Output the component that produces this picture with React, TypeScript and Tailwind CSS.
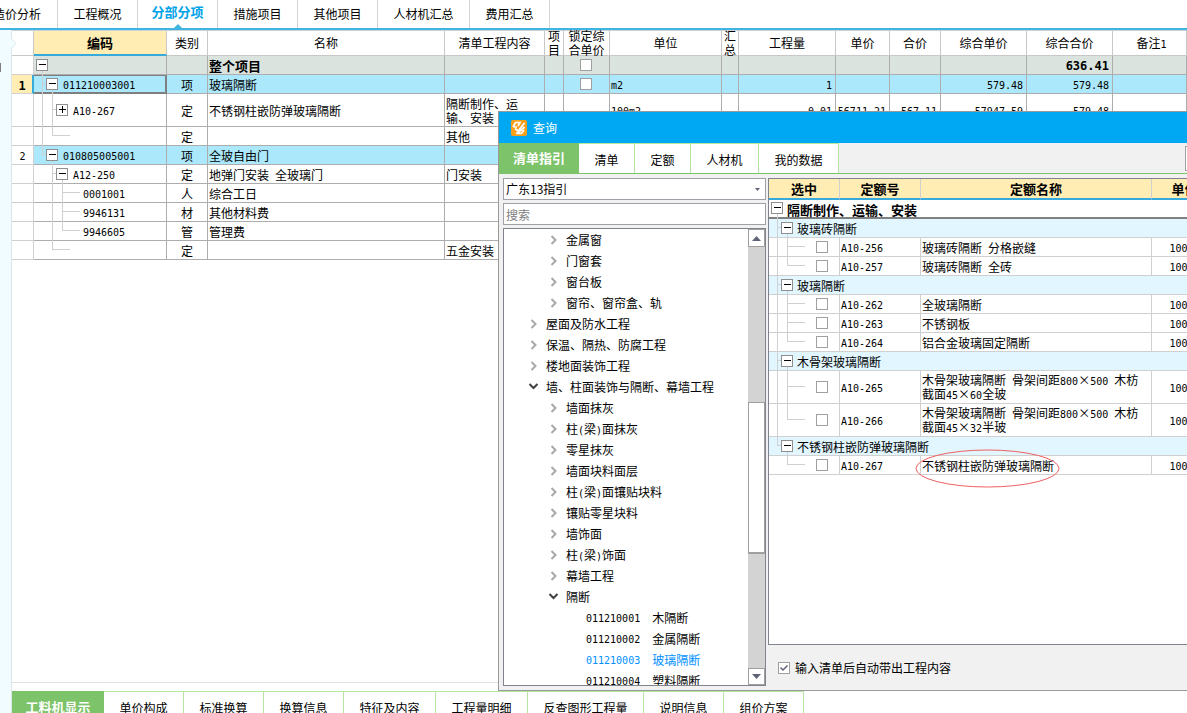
import React, { useState } from "react";
import clsx from "clsx";

const FONT = "font-['Noto_Sans_CJK_SC',sans-serif]";
const MONO = "font-['DejaVu_Sans_Mono','Noto_Sans_CJK_SC',monospace] leading-none";

/* Latin letters and digits are half the width of a Chinese character */
const Txt = ({ children, big }: { children: string; big?: boolean }) => (
  <>
    {children.split(/([\x20-\x7e]+)/).map((part, i) =>
      i % 2 ? (
        <span key={i} className={clsx(MONO, big ? "text-[12px]" : "text-[10px]")}>
          {part}
        </span>
      ) : (
        part
      )
    )}
  </>
);

type GuideProps = {
  width: number;
  height: number;
  d?: string;
  box?: number;
  plus?: boolean;
  color?: string;
};

/* Indent lines of a tree row, with the fold box when the row has children */
const Guide = ({ width, height, d, box, plus, color = "#d0d0d0" }: GuideProps) => {
  const top = Math.floor((height - 12) / 2);
  const drawing = (
    <svg width={width} height={height} className="block overflow-visible" shapeRendering="crispEdges">
      {d && <path d={d} fill="none" stroke={color} />}
      {box !== undefined && (
        <>
          <rect x={box + 0.5} y={top + 0.5} width={11} height={11} fill="#fff" stroke="#8f8f8f" />
          <path
            d={`M${box + 3} ${top + 5.5}h7${plus ? `M${box + 6.5} ${top + 2}v7` : ""}`}
            stroke="#000"
            fill="none"
          />
        </>
      )}
    </svg>
  );
  if (box === undefined) return drawing;
  return (
    <button type="button" aria-label={plus ? "展开" : "收起"} className="shrink-0">
      {drawing}
    </button>
  );
};

const Check = ({ label, defaultChecked }: { label: string; defaultChecked?: boolean }) => (
  <input
    type="checkbox"
    aria-label={label}
    defaultChecked={defaultChecked}
    className="block size-3 shrink-0 appearance-none border border-[#a0a0a0] bg-white"
  />
);

const topTabs = [
  { name: "造价分析", className: "w-[58px] justify-end pr-4" },
  { name: "工程概况", className: "w-20" },
  { name: "分部分项", className: "w-20" },
  { name: "措施项目", className: "w-20" },
  { name: "其他项目", className: "w-20" },
  { name: "人材机汇总", className: "w-23" },
  { name: "费用汇总", className: "w-20" },
];

const bottomTabs = [
  { name: "工料机显示", className: "w-23" },
  { name: "单价构成", className: "w-20" },
  { name: "标准换算", className: "w-20" },
  { name: "换算信息", className: "w-20" },
  { name: "特征及内容", className: "w-23" },
  { name: "工程量明细", className: "w-23" },
  { name: "反查图形工程量", className: "w-29" },
  { name: "说明信息", className: "w-20" },
  { name: "组价方案", className: "w-20" },
];

const queryTabs = [
  { name: "清单指引", className: "w-20" },
  { name: "清单", className: "w-14" },
  { name: "定额", className: "w-14" },
  { name: "人材机", className: "w-17" },
  { name: "我的数据", className: "w-20" },
];

const columns = [
  { name: "", className: "w-[22px]" },
  { name: "编码", className: "w-[133px]" },
  { name: "类别", className: "w-[41px]" },
  { name: "名称", className: "w-[237px]" },
  { name: "清单工程内容", className: "w-[100px]" },
  { name: "项目", className: "w-[19px]" },
  { name: "锁定综合单价", className: "w-[46px]" },
  { name: "单位", className: "w-[112px]" },
  { name: "汇总", className: "w-[17px]" },
  { name: "工程量", className: "w-[97px]" },
  { name: "单价", className: "w-[54px]" },
  { name: "合价", className: "w-[51px]" },
  { name: "综合单价", className: "w-[86px]" },
  { name: "综合合价", className: "w-[86px]" },
  { name: "备注1", className: "" },
];

type BillRow = {
  no?: string;
  kind: "total" | "item" | "plain";
  code?: string;
  guide: GuideProps;
  type?: string;
  name?: string;
  content?: string;
  lock?: boolean;
  unit?: string;
  nums?: string[];
  selected?: boolean;
};

const billRows: BillRow[] = [
  {
    kind: "total",
    guide: { width: 14, height: 18, box: 2, d: "M8.5 15V19" },
    name: "整个项目",
    lock: true,
    nums: ["", "", "", "", "636.41"],
  },
  {
    no: "1",
    kind: "item",
    code: "011210003001",
    guide: { width: 24, height: 18, box: 12, d: "M8.5 0V19M8.5 8.5H12M18.5 15V19" },
    type: "项",
    name: "玻璃隔断",
    lock: true,
    unit: "m2",
    nums: ["1", "", "", "579.48", "579.48"],
    selected: true,
  },
  {
    kind: "plain",
    code: "A10-267",
    guide: { width: 34, height: 32, box: 22, plus: true, d: "M8.5 0V33M18.5 0V33M18.5 15.5H22" },
    type: "定",
    name: "不锈钢柱嵌防弹玻璃隔断",
    content: "隔断制作、运输、安装",
    unit: "100m2",
    nums: ["0.01", "56711.21", "567.11", "57947.59", "579.48"],
  },
  {
    kind: "plain",
    guide: { width: 36, height: 18, d: "M8.5 0V19M18.5 0V8.5H36" },
    type: "定",
    content: "其他",
  },
  {
    no: "2",
    kind: "item",
    code: "010805005001",
    guide: { width: 24, height: 18, box: 12, d: "M8.5 0V8.5H12M18.5 15V19" },
    type: "项",
    name: "全玻自由门",
  },
  {
    kind: "plain",
    code: "A12-250",
    guide: { width: 34, height: 18, box: 22, d: "M18.5 0V19M18.5 8.5H22M28.5 15V19" },
    type: "定",
    name: "地弹门安装 全玻璃门",
    content: "门安装",
  },
  {
    kind: "plain",
    code: "0001001",
    guide: { width: 44, height: 18, d: "M18.5 0V19M28.5 0V19M28.5 8.5H46" },
    type: "人",
    name: "综合工日",
  },
  {
    kind: "plain",
    code: "9946131",
    guide: { width: 44, height: 18, d: "M18.5 0V19M28.5 0V19M28.5 8.5H46" },
    type: "材",
    name: "其他材料费",
  },
  {
    kind: "plain",
    code: "9946605",
    guide: { width: 44, height: 18, d: "M18.5 0V19M28.5 0V8.5H46" },
    type: "管",
    name: "管理费",
  },
  {
    kind: "plain",
    guide: { width: 36, height: 18, d: "M18.5 0V8.5H36" },
    type: "定",
    content: "五金安装",
  },
];

const treeRows = [
  { level: 1, name: "金属窗" },
  { level: 1, name: "门窗套" },
  { level: 1, name: "窗台板" },
  { level: 1, name: "窗帘、窗帘盒、轨" },
  { level: 0, name: "屋面及防水工程" },
  { level: 0, name: "保温、隔热、防腐工程" },
  { level: 0, name: "楼地面装饰工程" },
  { level: 0, name: "墙、柱面装饰与隔断、幕墙工程", open: true },
  { level: 1, name: "墙面抹灰" },
  { level: 1, name: "柱(梁)面抹灰" },
  { level: 1, name: "零星抹灰" },
  { level: 1, name: "墙面块料面层" },
  { level: 1, name: "柱(梁)面镶贴块料" },
  { level: 1, name: "镶贴零星块料" },
  { level: 1, name: "墙饰面" },
  { level: 1, name: "柱(梁)饰面" },
  { level: 1, name: "幕墙工程" },
  { level: 1, name: "隔断", open: true },
  { level: 2, code: "011210001", name: "木隔断" },
  { level: 2, code: "011210002", name: "金属隔断" },
  { level: 2, code: "011210003", name: "玻璃隔断", active: true },
  { level: 2, code: "011210004", name: "塑料隔断" },
];

type QuotaGroup = { name: string; last?: boolean; items: { code: string; name: string; tall?: boolean; marked?: boolean }[] };

const quotaGroups: QuotaGroup[] = [
  {
    name: "玻璃砖隔断",
    items: [
      { code: "A10-256", name: "玻璃砖隔断 分格嵌缝" },
      { code: "A10-257", name: "玻璃砖隔断 全砖" },
    ],
  },
  {
    name: "玻璃隔断",
    items: [
      { code: "A10-262", name: "全玻璃隔断" },
      { code: "A10-263", name: "不锈钢板" },
      { code: "A10-264", name: "铝合金玻璃固定隔断" },
    ],
  },
  {
    name: "木骨架玻璃隔断",
    items: [
      { code: "A10-265", name: "木骨架玻璃隔断 骨架间距800×500 木枋截面45×60全玻", tall: true },
      { code: "A10-266", name: "木骨架玻璃隔断 骨架间距800×500 木枋截面45×32半玻", tall: true },
    ],
  },
  {
    name: "不锈钢柱嵌防弹玻璃隔断",
    last: true,
    items: [{ code: "A10-267", name: "不锈钢柱嵌防弹玻璃隔断", marked: true }],
  },
];

const TopTabs = () => (
  <nav className="flex h-[30px] shrink-0 border-b-2 border-[#3fb4e0] bg-white">
    {topTabs.map((tab) => (
      <button
        key={tab.name}
        type="button"
        className={clsx(
          "relative flex h-7 shrink-0 items-center border-r border-[#d4d4d4] whitespace-nowrap",
          tab.className,
          tab.name !== "造价分析" && "justify-center",
          tab.name === "分部分项" && "pb-1 text-[13px] font-bold text-[#00a2e8]"
        )}
      >
        {tab.name}
        {tab.name === "分部分项" && (
          <svg className="absolute bottom-0 left-9 h-1 w-2" viewBox="0 0 8 4">
            <path d="M4 0l4 4H0z" fill="#3fb4e0" />
          </svg>
        )}
      </button>
    ))}
  </nav>
);

const BillTable = () => (
  <table className="w-full table-fixed border-separate border-spacing-0 border-t border-[#c8d4d8]">
    <colgroup>
      {columns.map((col) => (
        <col key={col.name} className={col.className} />
      ))}
    </colgroup>
    <thead>
      <tr>
        {columns.map((col) => (
          <th
            key={col.name}
            className={clsx(
              "border-r border-[#c8c8c8] p-0",
              col.name === "编码"
                ? "border-b-2 border-b-[#36a9dd] bg-[#ffedb4] text-[13px] font-bold"
                : "border-b font-normal"
            )}
          >
            <div
              className={clsx(
                "flex items-center justify-center",
                col.name === "编码" ? "h-[23px]" : "h-6",
                col.name === "备注1" && "pl-1"
              )}
            >
              <span>
                <Txt>{col.name}</Txt>
              </span>
            </div>
          </th>
        ))}
      </tr>
    </thead>
    <tbody>
      {billRows.map((row, i) => {
        const fill = clsx(row.kind === "total" && "bg-[#dae3de]", row.kind === "item" && "bg-[#ace8fb]");
        const cell = clsx("border-r border-b border-[#adadad]", fill);
        const nums = row.nums ?? ["", "", "", "", ""];
        return (
          <tr key={i} className={clsx(row.kind === "total" && "text-[13px] font-bold")}>
            <td
              className={clsx(
                "border-b border-[#d0d0d0] text-center",
                row.selected ? "border-r-2 border-r-[#36a9dd] bg-[#ffedb4] pt-px font-bold" : "border-r"
              )}
            >
              <Txt big={row.selected}>{row.no ?? ""}</Txt>
            </td>
            <td
              className={clsx(
                "border-r border-b",
                fill,
                row.selected
                  ? "border-[#7f7f7f] shadow-[inset_-1px_-1px_0_#7f7f7f,inset_0_1px_0_#7f7f7f]"
                  : "border-[#adadad]"
              )}
            >
              <div className="flex items-center gap-[5px]">
                <Guide {...row.guide} />
                <span>
                  <Txt>{row.code ?? ""}</Txt>
                </span>
              </div>
            </td>
            <td className={clsx(cell, "pt-px text-center")}>{row.type}</td>
            <td className={clsx(cell, "pt-px pl-px")}>
              <Txt>{row.name ?? ""}</Txt>
            </td>
            <td className={clsx(cell, "pt-px pl-px")}>{row.content && <div className="pr-4">{row.content}</div>}</td>
            <td className={cell} />
            <td className={cell}>
              {row.lock && (
                <div className="flex justify-center pr-px">
                  <Check label="锁定综合单价" />
                </div>
              )}
            </td>
            <td className={clsx(cell, "pl-px")}>
              <Txt>{row.unit ?? ""}</Txt>
            </td>
            <td className={cell} />
            {nums.map((n, k) => (
              <td key={k} className={clsx(cell, "pr-[3px] text-right")}>
                <Txt big={row.kind === "total"}>{n}</Txt>
              </td>
            ))}
            <td className={cell} />
          </tr>
        );
      })}
    </tbody>
  </table>
);

const GuideTree = () => (
  <div className="flex min-h-0 flex-1 border border-[#80848f] bg-white">
    <ul className="min-w-0 flex-1 overflow-hidden">
      {treeRows.map((row) => (
        <li
          key={row.name + row.level}
          className={clsx(
            "flex h-[21px] items-center whitespace-nowrap",
            row.level === 0 && "pl-6",
            row.level === 1 && "pl-11",
            row.level === 2 && "gap-3 pl-[82px]",
            row.active && "text-[#0090ff]"
          )}
        >
          {row.level < 2 && (
            <button type="button" aria-label={row.open ? "收起" : "展开"} className="mr-1.5 w-3">
              {row.open ? (
                <svg width="12" height="10" viewBox="0 0 12 10" fill="none" stroke="#404040" strokeWidth="2">
                  <path d="M1.5 2l4 4 4-4" />
                </svg>
              ) : (
                <svg width="12" height="10" viewBox="0 0 12 10" fill="none" stroke="#a8a8a8" strokeWidth="2">
                  <path d="M3.5 1l4 4-4 4" />
                </svg>
              )}
            </button>
          )}
          {row.code && (
            <span className="pb-px">
              <Txt>{row.code}</Txt>
            </span>
          )}
          <span>
            <Txt>{row.name}</Txt>
          </span>
        </li>
      ))}
    </ul>
    <div className="flex w-[17px] shrink-0 flex-col bg-[#d3d3d3]">
      <button
        type="button"
        aria-label="向上滚动"
        className="flex h-[18px] items-center justify-center border border-[#a0a0a0] bg-white"
      >
        <svg width="9" height="5" viewBox="0 0 9 5">
          <path d="M4.5 0L9 5H0z" fill="#5f6478" />
        </svg>
      </button>
      <div className="flex-[156]" />
      <div className="flex-[150] border border-b-2 border-[#a0a0a0] bg-white" />
      <div className="flex-[115]" />
      <button
        type="button"
        aria-label="向下滚动"
        className="flex h-[17px] items-center justify-center border border-[#a0a0a0] bg-white"
      >
        <svg width="9" height="5" viewBox="0 0 9 5">
          <path d="M0 0h9L4.5 5z" fill="#5f6478" />
        </svg>
      </button>
    </div>
  </div>
);

const quotaCell = "border-r border-b border-[#d0d0d0]";

const QuotaTable = () => (
  <table className="w-full min-w-[449px] table-fixed border-separate border-spacing-0">
    <colgroup>
      <col className="w-[71px]" />
      <col className="w-[81px]" />
      <col />
      <col className="w-[66px]" />
    </colgroup>
    <thead>
      <tr>
        {["选中", "定额号", "定额名称", "单位"].map((name) => (
          <th
            key={name}
            className="h-[21px] border-r border-b-2 border-r-[#d0d0d0] border-b-[#36a9dd] bg-[#ffedb4] p-0 text-[13px] font-bold"
          >
            {name}
          </th>
        ))}
      </tr>
    </thead>
    <tbody>
      <tr>
        <td colSpan={4} className="border-b-2 border-[#808080] text-[13px] font-bold">
          <div className="flex items-center gap-1">
            <Guide width={14} height={17} box={2} d="M8.5 14V19" />
            <span className="pt-0.5">隔断制作、运输、安装</span>
          </div>
        </td>
      </tr>
      {quotaGroups.map((group) => (
        <React.Fragment key={group.name}>
          <tr>
            <td colSpan={4} className="border-b border-[#d0d0d0] bg-[#e1f6ff]">
              <div className="flex items-center gap-1">
                <Guide
                  width={24}
                  height={18}
                  box={12}
                  d={group.last ? "M8.5 0V8.5H12M18.5 15V19" : "M8.5 0V19M8.5 8.5H12M18.5 15V19"}
                />
                <span className="pt-0.5">{group.name}</span>
              </div>
            </td>
          </tr>
          {group.items.map((item, i) => {
            const h = item.tall ? 32 : 18;
            const mid = h / 2 - 0.5;
            const stem = i === group.items.length - 1 ? mid : h + 1;
            return (
              <tr key={item.code}>
                <td className={quotaCell}>
                  <div className="flex items-center gap-[11px]">
                    <Guide
                      width={36}
                      height={h}
                      d={`${group.last ? "" : `M8.5 0V${h + 1}`}M18.5 0V${stem}M18.5 ${mid}H36`}
                    />
                    <Check label={item.code} />
                  </div>
                </td>
                <td className={clsx(quotaCell, "pl-px")}>
                  <Txt>{item.code}</Txt>
                </td>
                <td className={clsx(quotaCell, "relative pl-px", item.tall ? "pr-2" : "pt-px")}>
                  <Txt>{item.name}</Txt>
                  {item.marked && (
                    <svg
                      className="pointer-events-none absolute -top-2 -left-1.5 h-10 w-[146px]"
                      viewBox="0 0 146 40"
                      fill="none"
                      stroke="#f06060"
                    >
                      <ellipse cx="72.5" cy="20.5" rx="71.5" ry="18.5" />
                    </svg>
                  )}
                </td>
                <td className={clsx(quotaCell, "text-center")}>
                  <Txt>100m2</Txt>
                </td>
              </tr>
            );
          })}
        </React.Fragment>
      ))}
    </tbody>
  </table>
);

const QueryDialog = () => {
  const [keyword, setKeyword] = useState("");

  return (
    <section
      role="dialog"
      aria-label="查询"
      className="absolute top-[111px] right-0 bottom-[22px] left-[498px] flex flex-col overflow-hidden border-y border-l border-[#999] bg-[#f1f1f1]"
    >
      <header className="flex h-[31px] shrink-0 items-center gap-1.5 bg-[#00a8f3] pl-3 text-white">
        <svg width="16" height="16" viewBox="0 0 16 16">
          <rect width="16" height="16" rx="2" fill="#f9a01b" />
          <path
            d="M2 7l2.500-4.500h4.500L7 6M2.500 7H6M4 8.500L7 11l6.500-8M5 13.500l2.500-1 6-5.500M6 13.500h4.500L13 10"
            fill="none"
            stroke="#fff"
            strokeWidth="1.700"
          />
        </svg>
        查询
      </header>

      {/* Tabs */}
      <nav className="flex h-[31px] shrink-0 border-b border-[#7dc36a]">
        {queryTabs.map((tab, i) => (
          <button
            key={tab.name}
            type="button"
            className={clsx(
              "flex items-center justify-center",
              tab.className,
              i === 0
                ? "bg-[#7dc36a] text-[13px] font-bold text-white"
                : "border-t border-r border-[#b4e6a0] bg-white pt-0.5"
            )}
          >
            {tab.name}
          </button>
        ))}
        <button
          type="button"
          aria-label="更多"
          className="-mr-4 mt-[3px] ml-auto h-[25px] w-[18px] shrink-0 border border-[#a0a0a0] bg-white"
        />
      </nav>

      <div className="flex min-h-0 flex-1 gap-0.5 pt-1">
        {/* Guide list */}
        <div className="mb-1 ml-1 flex w-[263px] shrink-0 flex-col">
          <div className="relative">
            <select
              aria-label="指引"
              className="block h-[22px] w-full appearance-none border border-[#a0a0a8] bg-white pl-0.5"
            >
              <option>广东13指引</option>
            </select>
            <svg className="pointer-events-none absolute top-2.5 right-1.5" width="5" height="3" viewBox="0 0 5 3">
              <path d="M0 0h5L2.5 3z" fill="#5f6478" />
            </svg>
          </div>
          <input
            type="text"
            aria-label="搜索"
            placeholder="搜索"
            value={keyword}
            onChange={(e) => setKeyword(e.target.value)}
            className="my-[3px] h-[22px] w-full border border-[#a0a0a8] bg-white pl-0.5 placeholder:text-[#808080]"
          />
          <GuideTree />
        </div>

        {/* Quota list */}
        <div className="flex min-w-0 flex-1 flex-col">
          <div className="min-h-0 flex-1 overflow-hidden border-y border-l border-[#80848f] bg-white">
            <QuotaTable />
          </div>
          <label className="flex h-[45px] shrink-0 items-center gap-[5px] pl-2.5">
            <span className="grid place-items-center">
              <input
                type="checkbox"
                defaultChecked
                className="peer col-start-1 row-start-1 size-3 appearance-none border border-[#a0a0a0] bg-white"
              />
              <svg
                className="pointer-events-none col-start-1 row-start-1 hidden peer-checked:block"
                width="8"
                height="8"
                viewBox="0 0 8 8"
                fill="none"
                stroke="#5f6478"
                strokeWidth="1.5"
              >
                <path d="M.5 3.5L3 6l4.5-4.5" />
              </svg>
            </span>
            输入清单后自动带出工程内容
          </label>
        </div>
      </div>
    </section>
  );
};

export default function App() {
  return (
    <div className={clsx("relative flex h-screen flex-col overflow-hidden bg-white text-[12px] leading-[14px] text-black", FONT)}>
      <TopTabs />
      <div className="flex min-h-0 flex-1">
        <aside className="relative w-3 shrink-0 border-r border-[#dfe6e8] bg-[#f0fcff]">
          <svg className="absolute top-2 left-[11px]" width="6" height="11" viewBox="0 0 6 11">
            <path d="M0 0l5 5.5-5 5.5" fill="#f0fcff" stroke="#dfe6e8" />
          </svg>
          <div className="mt-[33px] h-[9px] w-px bg-[#808080]" />
        </aside>
        <main className="flex min-w-0 flex-1 flex-col overflow-hidden">
          <div className="min-h-0 flex-1 overflow-hidden border-b border-[#e0e0e0]">
            <BillTable />
          </div>
          <nav className="mt-2 flex h-[22px] shrink-0 items-start overflow-hidden">
            {bottomTabs.map((tab, i) => (
              <button
                key={tab.name}
                type="button"
                className={clsx(
                  "flex h-8 shrink-0 items-center justify-center whitespace-nowrap",
                  tab.className,
                  i === 0
                    ? "bg-[#7dc36a] text-[13px] font-bold text-white"
                    : "border-t border-r border-[#b4e6a0] bg-white"
                )}
              >
                {tab.name}
              </button>
            ))}
          </nav>
        </main>
      </div>
      <QueryDialog />
    </div>
  );
}
